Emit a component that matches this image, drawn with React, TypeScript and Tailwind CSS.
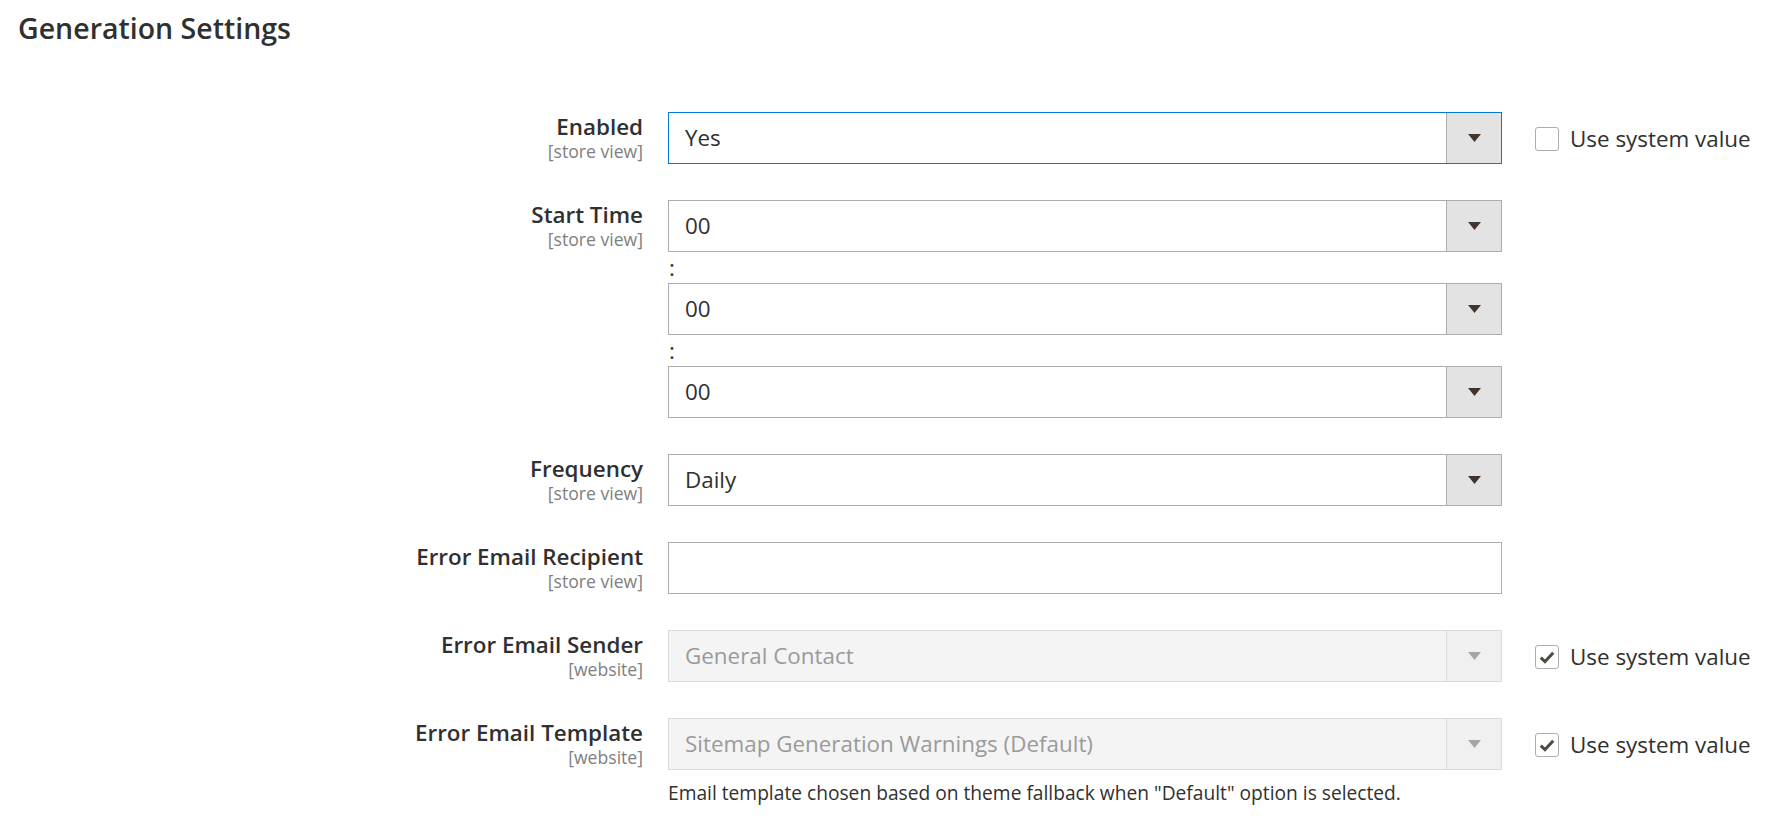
import React from "react";

const font = { fontFamily: '"Open Sans", "Noto Sans", sans-serif' };

function Arrow({ disabled }: { disabled?: boolean }) {
  return (
    <svg width="13" height="8" viewBox="0 0 13 8" className="block">
      <polygon points="0,0 13,0 6.5,8" fill={disabled ? "#a7a4a2" : "#41362f"} />
    </svg>
  );
}

function Select({ value, focus, disabled }: { value: string; focus?: boolean; disabled?: boolean }) {
  const border = focus ? "border-[#007bdb]" : disabled ? "border-[#dadada]" : "border-[#adadad]";
  return (
    <div
      className={`flex h-[52px] w-[834px] border ${border} ${disabled ? "bg-[#f4f4f4]" : "bg-white"}`}
    >
      <div
        className={`flex flex-1 items-center pl-[16px] text-[22.4px] ${disabled ? "text-[#9a9a9a]" : "text-[#303030]"}`}
      >
        {value}
      </div>
      <div
        className={`flex w-[55px] items-center justify-center border-l ${disabled ? "border-[#dadada] bg-[#f0f0f0]" : "border-[#adadad] bg-[#e3e3e3]"}`}
      >
        <Arrow disabled={disabled} />
      </div>
    </div>
  );
}

function UseSystem({ checked }: { checked?: boolean }) {
  return (
    <div className="flex h-[52px] items-center gap-[11px] pl-[33px] pt-[2px]">
      <span className="flex h-[24px] w-[24px] items-center justify-center rounded-[3px] border border-[#adadad] bg-white">
        {checked && (
          <svg width="16" height="13" viewBox="0 0 16 13">
            <path d="M1.8 6.6 L6 10.6 L14.2 1.8" fill="none" stroke="#514943" strokeWidth="3" />
          </svg>
        )}
      </span>
      <span className="-mt-[1px] text-[22.4px] text-[#303030]">Use system value</span>
    </div>
  );
}

function Label({ title, scope }: { title: string; scope: string }) {
  return (
    <div className="w-[643px] shrink-0 pt-[1px] text-right">
      <div className="text-[22.4px] font-semibold leading-[28px] text-[#303030]">{title}</div>
      <div className="mt-[1px] text-[17.6px] leading-[19px] text-[#808080]">{scope}</div>
    </div>
  );
}

function Colon() {
  return <div className="h-[31px] pl-[1px] text-[22.4px] leading-[31px] text-[#303030]">:</div>;
}

export default function App() {
  return (
    <div className="min-h-[818px] w-[1768px] bg-white" style={font}>
      <h1 className="pl-[18px] pt-[10px] text-[28.5px] font-semibold leading-[36px] text-[#303030]">
        Generation Settings
      </h1>

      <div className="mt-[66px] flex flex-col gap-[36px]">
        <div className="flex">
          <Label title="Enabled" scope="[store view]" />
          <div className="ml-[25px]">
            <Select value="Yes" focus />
          </div>
          <UseSystem />
        </div>

        <div className="flex">
          <Label title="Start Time" scope="[store view]" />
          <div className="ml-[25px]">
            <Select value="00" />
            <Colon />
            <Select value="00" />
            <Colon />
            <Select value="00" />
          </div>
        </div>

        <div className="flex">
          <Label title="Frequency" scope="[store view]" />
          <div className="ml-[25px]">
            <Select value="Daily" />
          </div>
        </div>

        <div className="flex">
          <Label title="Error Email Recipient" scope="[store view]" />
          <div className="ml-[25px]">
            <div className="h-[52px] w-[834px] border border-[#adadad] bg-white" />
          </div>
        </div>

        <div className="flex">
          <Label title="Error Email Sender" scope="[website]" />
          <div className="ml-[25px]">
            <Select value="General Contact" disabled />
          </div>
          <UseSystem checked />
        </div>

        <div className="flex">
          <Label title="Error Email Template" scope="[website]" />
          <div className="ml-[25px]">
            <Select value="Sitemap Generation Warnings (Default)" disabled />
            <p className="mt-[10px] text-[19.2px] leading-[26px] text-[#303030]">
              Email template chosen based on theme fallback when "Default" option is selected.
            </p>
          </div>
          <UseSystem checked />
        </div>
      </div>
    </div>
  );
}
